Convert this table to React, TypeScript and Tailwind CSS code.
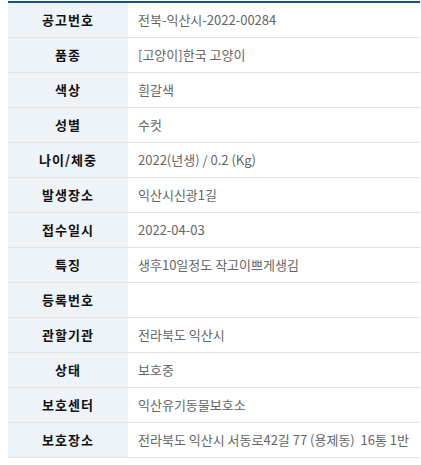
const rows: [string, string][] = [
  ['공고번호', '전북-익산시-2022-00284'],
  ['품종', '[고양이]한국 고양이'],
  ['색상', '흰갈색'],
  ['성별', '수컷'],
  ['나이/체중', '2022(년생) / 0.2 (Kg)'],
  ['발생장소', '익산시신광1길'],
  ['접수일시', '2022-04-03'],
  ['특징', '생후10일정도 작고이쁘게생김'],
  ['등록번호', ''],
  ['관할기관', '전라북도 익산시'],
  ['상태', '보호중'],
  ['보호센터', '익산유기동물보호소'],
  ['보호장소', '전라북도 익산시 서동로42길 77 (용제동)  16통 1반'],
];

export default function App() {
  return (
    <div className="bg-white w-[421px] h-[465px] overflow-hidden pt-px pl-2 pr-px" style={{ fontFamily: '"Noto Sans CJK KR", "Noto Sans", sans-serif' }}>
      <table className="w-[412px] border-collapse border-t-2 border-[#1b4d8a] text-[13px]">
        <tbody>
          {rows.map(([label, value]) => (
            <tr key={label} className="h-[35px] border-b border-[#e3e3e3]">
              <th className="w-[120px] bg-[#eef3f8] text-center font-bold text-[#111] tracking-[1px]">{label}</th>
              <td className="pl-[10px] text-[#666] whitespace-pre">{value}</td>
            </tr>
          ))}
        </tbody>
      </table>
    </div>
  );
}
